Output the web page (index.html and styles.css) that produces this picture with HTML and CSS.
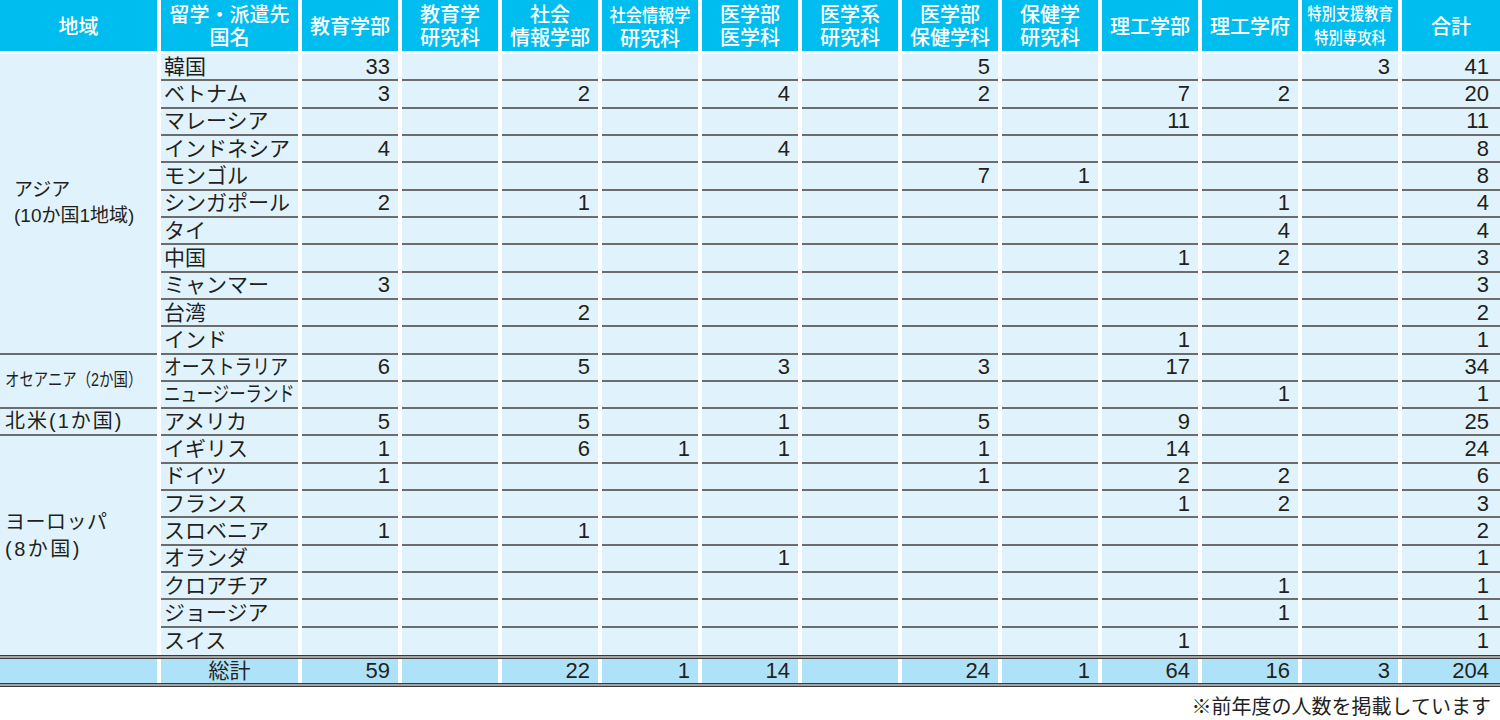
FILE: index.html
```html
<!DOCTYPE html>
<html lang="ja">
<head>
<meta charset="utf-8">
<title>留学・派遣先国別人数</title>
<link rel="stylesheet" href="styles.css">
</head>
<body>
<main class="sheet">
  <div class="grid head">
    <div class="h"><p>地域</p></div>
    <div class="h"><p>留学・派遣先<br>国名</p></div>
    <div class="h"><p>教育学部</p></div>
    <div class="h"><p>教育学<br>研究科</p></div>
    <div class="h"><p>社会<br>情報学部</p></div>
    <div class="h"><p><span class="sq">社会情報学</span><br>研究科</p></div>
    <div class="h"><p>医学部<br>医学科</p></div>
    <div class="h"><p>医学系<br>研究科</p></div>
    <div class="h"><p>医学部<br>保健学科</p></div>
    <div class="h"><p>保健学<br>研究科</p></div>
    <div class="h"><p>理工学部</p></div>
    <div class="h"><p>理工学府</p></div>
    <div class="h"><p class="sq-b">特別支援教育<br>特別専攻科</p></div>
    <div class="h"><p>合計</p></div>
  </div>

  <div class="grid body">
    <div class="row">
      <div class="rg asia"><p>アジア<br>(10か国1地域)</p></div>
      <div class="ct">韓国</div>
      <div class="v">33</div><div class="v"></div><div class="v"></div><div class="v"></div><div class="v"></div><div class="v"></div><div class="v">5</div><div class="v"></div><div class="v"></div><div class="v"></div><div class="v">3</div><div class="v">41</div>
    </div>
    <div class="row">
      <div class="ct">ベトナム</div>
      <div class="v">3</div><div class="v"></div><div class="v">2</div><div class="v"></div><div class="v">4</div><div class="v"></div><div class="v">2</div><div class="v"></div><div class="v">7</div><div class="v">2</div><div class="v"></div><div class="v">20</div>
    </div>
    <div class="row">
      <div class="ct">マレーシア</div>
      <div class="v"></div><div class="v"></div><div class="v"></div><div class="v"></div><div class="v"></div><div class="v"></div><div class="v"></div><div class="v"></div><div class="v">11</div><div class="v"></div><div class="v"></div><div class="v">11</div>
    </div>
    <div class="row">
      <div class="ct">インドネシア</div>
      <div class="v">4</div><div class="v"></div><div class="v"></div><div class="v"></div><div class="v">4</div><div class="v"></div><div class="v"></div><div class="v"></div><div class="v"></div><div class="v"></div><div class="v"></div><div class="v">8</div>
    </div>
    <div class="row">
      <div class="ct">モンゴル</div>
      <div class="v"></div><div class="v"></div><div class="v"></div><div class="v"></div><div class="v"></div><div class="v"></div><div class="v">7</div><div class="v">1</div><div class="v"></div><div class="v"></div><div class="v"></div><div class="v">8</div>
    </div>
    <div class="row">
      <div class="ct">シンガポール</div>
      <div class="v">2</div><div class="v"></div><div class="v">1</div><div class="v"></div><div class="v"></div><div class="v"></div><div class="v"></div><div class="v"></div><div class="v"></div><div class="v">1</div><div class="v"></div><div class="v">4</div>
    </div>
    <div class="row">
      <div class="ct">タイ</div>
      <div class="v"></div><div class="v"></div><div class="v"></div><div class="v"></div><div class="v"></div><div class="v"></div><div class="v"></div><div class="v"></div><div class="v"></div><div class="v">4</div><div class="v"></div><div class="v">4</div>
    </div>
    <div class="row">
      <div class="ct">中国</div>
      <div class="v"></div><div class="v"></div><div class="v"></div><div class="v"></div><div class="v"></div><div class="v"></div><div class="v"></div><div class="v"></div><div class="v">1</div><div class="v">2</div><div class="v"></div><div class="v">3</div>
    </div>
    <div class="row">
      <div class="ct">ミャンマー</div>
      <div class="v">3</div><div class="v"></div><div class="v"></div><div class="v"></div><div class="v"></div><div class="v"></div><div class="v"></div><div class="v"></div><div class="v"></div><div class="v"></div><div class="v"></div><div class="v">3</div>
    </div>
    <div class="row">
      <div class="ct">台湾</div>
      <div class="v"></div><div class="v"></div><div class="v">2</div><div class="v"></div><div class="v"></div><div class="v"></div><div class="v"></div><div class="v"></div><div class="v"></div><div class="v"></div><div class="v"></div><div class="v">2</div>
    </div>
    <div class="row">
      <div class="ct">インド</div>
      <div class="v"></div><div class="v"></div><div class="v"></div><div class="v"></div><div class="v"></div><div class="v"></div><div class="v"></div><div class="v"></div><div class="v">1</div><div class="v"></div><div class="v"></div><div class="v">1</div>
    </div>

    <div class="row">
      <div class="rg oce"><p>オセアニア（2か国）</p></div>
      <div class="ct"><span class="cn cn-au">オーストラリア</span></div>
      <div class="v">6</div><div class="v"></div><div class="v">5</div><div class="v"></div><div class="v">3</div><div class="v"></div><div class="v">3</div><div class="v"></div><div class="v">17</div><div class="v"></div><div class="v"></div><div class="v">34</div>
    </div>
    <div class="row">
      <div class="ct"><span class="cn cn-nz">ニュージーランド</span></div>
      <div class="v"></div><div class="v"></div><div class="v"></div><div class="v"></div><div class="v"></div><div class="v"></div><div class="v"></div><div class="v"></div><div class="v"></div><div class="v">1</div><div class="v"></div><div class="v">1</div>
    </div>

    <div class="row">
      <div class="rg na"><p>北米(1か国)</p></div>
      <div class="ct">アメリカ</div>
      <div class="v">5</div><div class="v"></div><div class="v">5</div><div class="v"></div><div class="v">1</div><div class="v"></div><div class="v">5</div><div class="v"></div><div class="v">9</div><div class="v"></div><div class="v"></div><div class="v">25</div>
    </div>

    <div class="row">
      <div class="rg eu"><p>ヨーロッパ<br><span class="cnt">(8か国)</span></p></div>
      <div class="ct">イギリス</div>
      <div class="v">1</div><div class="v"></div><div class="v">6</div><div class="v">1</div><div class="v">1</div><div class="v"></div><div class="v">1</div><div class="v"></div><div class="v">14</div><div class="v"></div><div class="v"></div><div class="v">24</div>
    </div>
    <div class="row">
      <div class="ct">ドイツ</div>
      <div class="v">1</div><div class="v"></div><div class="v"></div><div class="v"></div><div class="v"></div><div class="v"></div><div class="v">1</div><div class="v"></div><div class="v">2</div><div class="v">2</div><div class="v"></div><div class="v">6</div>
    </div>
    <div class="row">
      <div class="ct">フランス</div>
      <div class="v"></div><div class="v"></div><div class="v"></div><div class="v"></div><div class="v"></div><div class="v"></div><div class="v"></div><div class="v"></div><div class="v">1</div><div class="v">2</div><div class="v"></div><div class="v">3</div>
    </div>
    <div class="row">
      <div class="ct">スロベニア</div>
      <div class="v">1</div><div class="v"></div><div class="v">1</div><div class="v"></div><div class="v"></div><div class="v"></div><div class="v"></div><div class="v"></div><div class="v"></div><div class="v"></div><div class="v"></div><div class="v">2</div>
    </div>
    <div class="row">
      <div class="ct">オランダ</div>
      <div class="v"></div><div class="v"></div><div class="v"></div><div class="v"></div><div class="v">1</div><div class="v"></div><div class="v"></div><div class="v"></div><div class="v"></div><div class="v"></div><div class="v"></div><div class="v">1</div>
    </div>
    <div class="row">
      <div class="ct">クロアチア</div>
      <div class="v"></div><div class="v"></div><div class="v"></div><div class="v"></div><div class="v"></div><div class="v"></div><div class="v"></div><div class="v"></div><div class="v"></div><div class="v">1</div><div class="v"></div><div class="v">1</div>
    </div>
    <div class="row">
      <div class="ct">ジョージア</div>
      <div class="v"></div><div class="v"></div><div class="v"></div><div class="v"></div><div class="v"></div><div class="v"></div><div class="v"></div><div class="v"></div><div class="v"></div><div class="v">1</div><div class="v"></div><div class="v">1</div>
    </div>
    <div class="row last">
      <div class="ct">スイス</div>
      <div class="v"></div><div class="v"></div><div class="v"></div><div class="v"></div><div class="v"></div><div class="v"></div><div class="v"></div><div class="v"></div><div class="v">1</div><div class="v"></div><div class="v"></div><div class="v">1</div>
    </div>
  </div>

  <div class="rule"></div>
  <div class="grid total">
    <div class="tc"></div>
    <div class="tc lbl">総計</div>
    <div class="tc v">59</div><div class="tc v"></div><div class="tc v">22</div><div class="tc v">1</div><div class="tc v">14</div><div class="tc v"></div><div class="tc v">24</div><div class="tc v">1</div><div class="tc v">64</div><div class="tc v">16</div><div class="tc v">3</div><div class="tc v">204</div>
  </div>
  <div class="rule"></div>

  <p class="note">※前年度の人数を掲載しています</p>
</main>
</body>
</html>
```

FILE: styles.css
```css
* {
  box-sizing: border-box;
  margin: 0;
  padding: 0;
}

body {
  background: #ffffff;
  color: #231f20;
  font-family: "Liberation Sans", "Noto Sans CJK JP", sans-serif;
}

.sheet {
  width: 1500px;
}

.grid {
  display: grid;
  grid-template-columns: 157px 137px repeat(11, 96px) 98px;
  column-gap: 4px;
}

/* header */
.head {
  height: 50px;
  margin-bottom: 4px;
}

.h {
  background: #00bdf0;
  color: #ffffff;
  display: flex;
  align-items: center;
  justify-content: center;
  text-align: center;
  font-size: 20px;
  font-weight: 500;
  line-height: 23px;
  padding-top: 3px;
}

.h p {
  white-space: nowrap;
}

.sq {
  display: inline-block;
  font-size: 18px;
  transform: scaleX(0.9);
}

.sq-b {
  font-size: 17px;
  line-height: 24px;
  transform: scaleX(0.84);
}

/* body */
.body {
  grid-template-rows: repeat(22, minmax(0, 1fr));
  height: 601px;
}

.row {
  display: contents;
}

.rg,
.ct,
.v {
  background: #e0f3fc;
  border-bottom: 2px solid #6c6c6c;
  display: flex;
  align-items: center;
  min-height: 0;
  line-height: 24px;
}

.last > div,
.rg.eu {
  border-bottom: 0;
}

.ct {
  padding-left: 3px;
  font-size: 21px;
  white-space: nowrap;
}

.cn {
  display: inline-block;
  transform-origin: left center;
}

.cn-au {
  transform: scaleX(0.85);
}

.cn-nz {
  transform: scaleX(0.78);
}

.v {
  justify-content: flex-end;
  padding-right: 8px;
  font-size: 22px;
}

.row > .v:last-child,
.total > .v:last-child {
  padding-right: 11px;
}

.rg {
  padding-left: 5px;
  font-size: 20px;
  line-height: 27px;
  white-space: nowrap;
}

.asia {
  grid-row: span 11;
  padding-left: 14px;
  font-size: 19px;
  line-height: 26px;
}

.oce {
  grid-row: span 2;
}

.oce p {
  font-size: 18px;
  transform: scaleX(0.8);
  transform-origin: left center;
}

.na {
  font-size: 20px;
  letter-spacing: 2px;
}

.eu {
  grid-row: span 8;
  padding-bottom: 20px;
  letter-spacing: 0.5px;
}

.cnt {
  letter-spacing: 2.5px;
}

/* total row */
.rule {
  height: 4px;
  background: linear-gradient(#3a3a3a 0 1px, #a4a4a4 1px 3px, #3a3a3a 3px 4px);
}

.total {
  height: 24px;
}

.tc {
  background: #aee2f8;
  display: flex;
  align-items: center;
  line-height: 24px;
}

.total .v {
  border-bottom: 0;
  background: #aee2f8;
}

.lbl {
  justify-content: center;
  font-size: 21px;
}

.note {
  text-align: right;
  font-size: 20px;
  line-height: 24px;
  margin-top: 8px;
  padding-right: 9px;
}
```
